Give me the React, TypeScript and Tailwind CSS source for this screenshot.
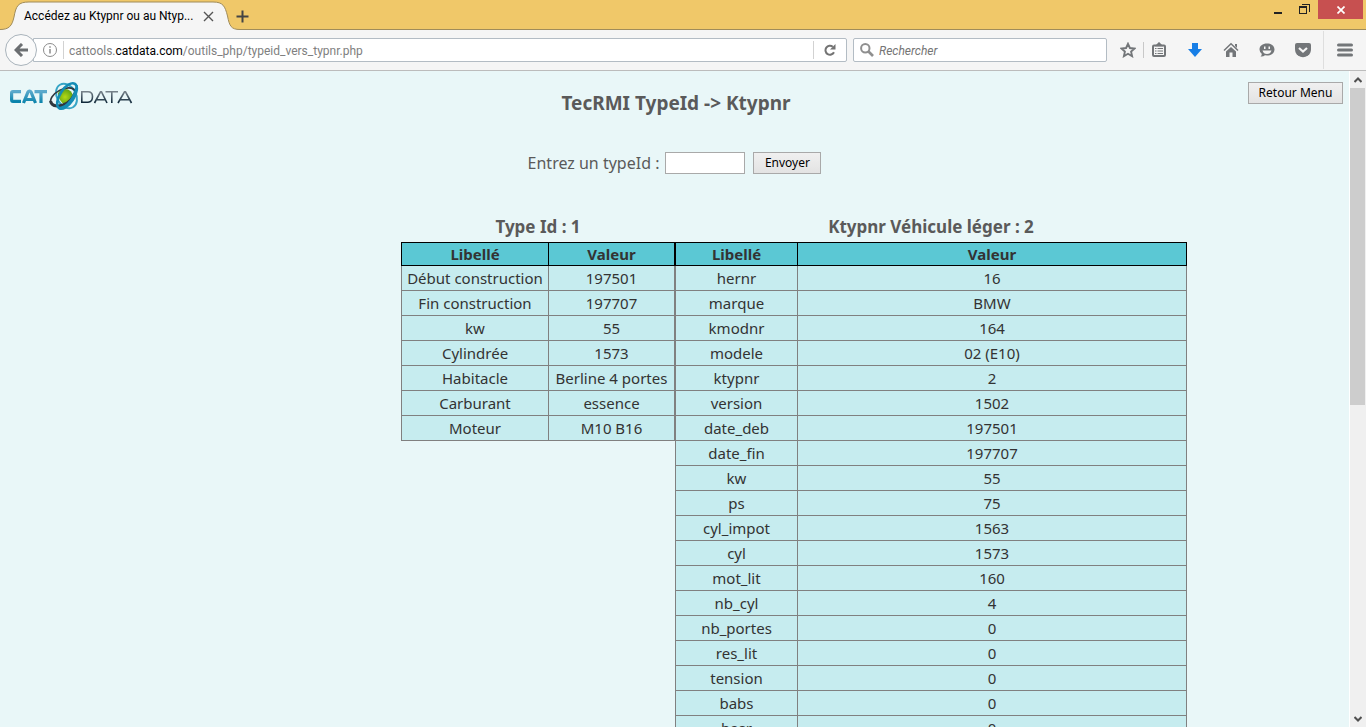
import React from "react";

const vehicle: [string, string][] = [
  ["Début construction", "197501"],
  ["Fin construction", "197707"],
  ["kw", "55"],
  ["Cylindrée", "1573"],
  ["Habitacle", "Berline 4 portes"],
  ["Carburant", "essence"],
  ["Moteur", "M10 B16"],
];

const ktypnr: [string, string][] = [
  ["hernr", "16"],
  ["marque", "BMW"],
  ["kmodnr", "164"],
  ["modele", "02 (E10)"],
  ["ktypnr", "2"],
  ["version", "1502"],
  ["date_deb", "197501"],
  ["date_fin", "197707"],
  ["kw", "55"],
  ["ps", "75"],
  ["cyl_impot", "1563"],
  ["cyl", "1573"],
  ["mot_lit", "160"],
  ["nb_cyl", "4"],
  ["nb_portes", "0"],
  ["res_lit", "0"],
  ["tension", "0"],
  ["babs", "0"],
  ["basr", "0"],
];

function TitleBar() {
  return (
    <header className="flex h-[30px] shrink-0 items-start justify-between bg-[#f0c869]">
      <div className="flex h-[30px] grow border-b border-[#a08c5a]">
        <div className="relative h-[30px] w-[240px] shrink-0">
          <svg className="absolute inset-0" width="240" height="30" viewBox="0 0 240 30" aria-hidden="true">
            <path
              d="M0 29.5 C9 29.5 12 26 14 17 C16 6 18 2 29 2 H213 C223 2 225 6 227.500 16 C229.500 26 231 29.500 240 29.500 V30 H0Z"
              fill="#f5f5f5"
            />
            <path
              d="M0 29.500 C9 29.500 12 26 14 17 C16 6 18 2 29 2 H213 C223 2 225 6 227.500 16 C229.500 26 231 29.500 240 29.500"
              fill="none"
              stroke="#a08c5a"
            />
          </svg>
          <div className="relative flex h-[30px] items-center pt-[2px] pl-6">
            <span className="w-[176px] text-[12px] whitespace-nowrap text-black">Accédez au Ktypnr ou au Ntyp...</span>
            <button aria-label="Fermer l'onglet" className="flex h-4 w-4 items-center justify-center">
              <svg width="11" height="11" viewBox="0 0 11 11" stroke="#555" strokeWidth="1.400">
                <path d="M1 1L10 10M10 1L1 10" />
              </svg>
            </button>
          </div>
        </div>
        <button aria-label="Nouvel onglet" className="flex h-[30px] w-[16px] items-center pt-[2px] -ml-1">
          <svg width="13" height="13" viewBox="0 0 13 13" stroke="#444" strokeWidth="2">
            <path d="M6.500 0.500V12.500M0.500 6.500H12.500" />
          </svg>
        </button>
      </div>
      <div className="flex h-[30px] items-start border-b border-[#a08c5a] pr-[3px]">
        <button aria-label="Réduire" className="flex h-[19px] w-[26px] items-center justify-center">
          <svg width="8" height="14" viewBox="0 0 8 14">
            <path d="M0 9H8V11H0Z" fill="#222" />
          </svg>
        </button>
        <button aria-label="Restaurer" className="flex h-[19px] w-[27px] items-center justify-center">
          <svg width="11" height="11" viewBox="0 0 11 11" fill="none" stroke="#222" shapeRendering="crispEdges">
            <path d="M3 .5H10.500V8M.5 3.500H7.500V9.500H.5ZM0 2.500H8" />
          </svg>
        </button>
        <button aria-label="Fermer" className="flex h-[19px] w-[45px] items-center justify-center bg-[#c75050]">
          <svg width="8" height="8" viewBox="0 0 8 8" stroke="#fff" strokeWidth="1.700">
            <path d="M0.500 0.500L7.500 7.500M7.500 0.500L0.500 7.500" />
          </svg>
        </button>
      </div>
    </header>
  );
}

function ToolButton({ label, children }: { label: string; children: React.ReactNode }) {
  return (
    <button aria-label={label} className="flex h-6 w-9 items-center justify-center">
      {children}
    </button>
  );
}

function Toolbar() {
  return (
    <nav className="flex h-[41px] shrink-0 items-center border-b border-[#bcbcbc] bg-[#f5f5f5] pl-[5px]">
      <button
        aria-label="Page précédente"
        className="relative z-10 flex h-8 w-8 shrink-0 items-center justify-center rounded-full border border-[#a9b3bb] bg-[#fafafa]"
      >
        <svg width="14" height="14" viewBox="0 0 14 14" fill="none" stroke="#6b6e71" strokeWidth="3">
          <path d="M8 1L2 7L8 13M2.500 7H14" />
        </svg>
      </button>
      <div className="-ml-1 flex h-6 min-w-0 flex-[804] items-center rounded-r-[2px] border border-[#b3bcc4] bg-white pl-2">
        <svg width="16" height="16" viewBox="0 0 16 16" fill="none" stroke="#8c8c8c" className="mr-[5px] shrink-0">
          <circle cx="8" cy="8" r="6.500" />
          <path d="M8 7V11.500M8 4.300V5.800" strokeWidth="1.500" />
        </svg>
        <div className="relative flex h-full min-w-0 grow items-center before:h-[18px] before:w-px before:bg-[#d2d2d2]">
          <input
            aria-label="Adresse"
            defaultValue="cattools.catdata.com/outils_php/typeid_vers_typnr.php"
            className="absolute inset-0 w-full bg-transparent pl-[6px] text-[12px] text-transparent outline-none"
          />
          <div aria-hidden="true" className="pointer-events-none flex h-full items-center pt-[2px] pl-[5px] text-[12px] whitespace-nowrap text-[#808080]">
            cattools.<span className="text-black">catdata.com</span>/outils_php/typeid_vers_typnr.php
          </div>
        </div>
        <button aria-label="Actualiser" className="flex h-[18px] w-[33px] shrink-0 items-center justify-center border-l border-[#d2d2d2]">
          <svg width="12" height="12" viewBox="0 0 12 12">
            <path d="M10 8.300A4.500 4.500 0 1 1 8.800 2.700" fill="none" stroke="#737373" strokeWidth="2" />
            <path d="M11.500 0V5.500H6Z" fill="#737373" />
          </svg>
        </button>
      </div>
      <div className="ml-[6px] flex h-6 min-w-0 flex-[246] items-center rounded-[2px] border border-[#b3bcc4] bg-white pl-[6px]">
        <svg width="14" height="14" viewBox="0 0 14 14" fill="none" stroke="#8f8f8f" className="shrink-0">
          <circle cx="5.300" cy="5.300" r="4.200" strokeWidth="2" />
          <path d="M8.500 8.500L13 13" strokeWidth="2.600" />
        </svg>
        <input
          aria-label="Rechercher"
          placeholder="Rechercher"
          className="h-full min-w-0 grow bg-transparent pt-[2px] pl-[5px] text-[12px] outline-none placeholder:italic placeholder:text-[#757575]"
        />
      </div>
      <div className="ml-[3px] flex shrink-0 items-center">
        <ToolButton label="Marquer cette page">
          <svg width="16" height="16" viewBox="0 0 16 16" fill="none" stroke="#737679" strokeWidth="1.900">
            <path d="M8 1.800L9.900 6L14.500 6.500L11.100 9.600L12.100 14.200L8 11.800L3.900 14.200L4.900 9.600L1.500 6.500L6.100 6Z" />
          </svg>
        </ToolButton>
        <div className="-ml-[3px] h-4 w-px bg-[#c8c8c8]" />
        <button aria-label="Marque-pages" className="flex h-6 w-[30px] items-center justify-center">
          <svg width="14" height="16" viewBox="0 0 14 16" fill="none" stroke="#737679">
            <path d="M1 4.500Q1 3.500 2 3.500H12Q13 3.500 13 4.500V13Q13 14 12 14H2Q1 14 1 13Z" strokeWidth="2" />
            <path d="M4.500 3.500L7 1L9.500 3.500Z" fill="#737679" strokeWidth="1.500" />
            <path d="M3 6.500H4.500M5.500 6.500H11M3 9H4.500M5.500 9H11M3 11.500H4.500M5.500 11.500H11" />
          </svg>
        </button>
        <div className="flex pl-[3px]">
          <ToolButton label="Téléchargements">
            <svg width="16" height="16" viewBox="0 0 16 16" fill="#177ee6">
              <path d="M5 1H11V7H15L8 15L1 7H5Z" />
            </svg>
          </ToolButton>
          <ToolButton label="Accueil">
            <svg width="16" height="16" viewBox="0 0 16 16" fill="#737679">
              <path d="M8 5L13 9.500V15H9.500V10.500H6.500V15H3V9.500Z" />
              <path d="M1 8.500L8 1.800L15 8.500" fill="none" stroke="#737679" strokeWidth="1.500" />
              <path d="M12 2H14V6L12 4Z" />
            </svg>
          </ToolButton>
          <ToolButton label="Hello">
            <svg width="16" height="16" viewBox="0 0 16 16">
              <path d="M8 1.500C12.500 1.500 15.500 4 15.500 7.500S12.500 13.500 8 13.500L6 13.200Q4 15 1.500 14.500Q3 13.300 2.700 11.700Q.5 10 .5 7.500C.5 4 3.500 1.500 8 1.500Z" fill="#737679" />
              <path d="M5 4.500H6.500V7H5ZM9.500 4.500H11V7H9.500ZM3.500 8.500H12.500Q11.500 12 8 12T3.500 8.500Z" fill="#f5f5f5" />
            </svg>
          </ToolButton>
          <ToolButton label="Pocket">
            <svg width="16" height="16" viewBox="0 0 16 16">
              <path d="M2 1H14Q16 1 16 3V7Q16 11 13 13.500Q8 17 3 13.500Q0 11 0 7V3Q0 1 2 1Z" fill="#737679" />
              <path d="M4 6L8 9.500L12 6" fill="none" stroke="#f5f5f5" strokeWidth="2.200" />
            </svg>
          </ToolButton>
        </div>
        <div className="ml-[2px] h-[38px] w-px bg-[#dedede]" />
        <button aria-label="Menu" className="flex h-6 w-[42px] items-center justify-center">
          <svg width="16" height="14" viewBox="0 0 16 14" stroke="#737679" strokeWidth="3" strokeLinecap="round">
            <path d="M1.500 2H14.500M1.500 7H14.500M1.500 12H14.500" />
          </svg>
        </button>
      </div>
    </nav>
  );
}

function Logo() {
  return (
    <svg width="124" height="34" viewBox="0 0 124 34" role="img" aria-label="CAT DATA">
      <defs>
        <linearGradient id="cat" x1="0" y1="0" x2="0" y2="1">
          <stop offset="0" stopColor="#5ba9cc" />
          <stop offset="1" stopColor="#0a83ab" />
        </linearGradient>
        <linearGradient id="data" x1="0" y1="0" x2="0" y2="1">
          <stop offset="0" stopColor="#76828a" />
          <stop offset="1" stopColor="#10293a" />
        </linearGradient>
        <radialGradient id="globe">
          <stop offset="0" stopColor="#b5d916" />
          <stop offset="1" stopColor="#5fa314" />
        </radialGradient>
      </defs>
      <g fill="none" stroke="url(#cat)" strokeWidth="3.200">
        <path d="M12 12.600H4Q2.600 12.600 2.600 14V20.500Q2.600 22.400 4 22.400H12" />
        <path d="M14.500 24L19 13Q19.500 12 20.500 12Q21.500 12 22 13L26.500 24M17 20.500H24" />
        <path d="M25.500 12.600H38M32 12.600V24" />
      </g>
      <circle cx="56" cy="18" r="8" fill="url(#globe)" />
      <ellipse cx="57.500" cy="17" rx="9.500" ry="13" transform="rotate(-30 57.500 17)" fill="none" stroke="#e9f7f8" strokeWidth="3.600" />
      <ellipse cx="57.500" cy="17" rx="9.500" ry="13" transform="rotate(-30 57.500 17)" fill="none" stroke="#36a5c6" strokeWidth="2" />
      <ellipse cx="54" cy="18" rx="13.500" ry="7.500" transform="rotate(-28 54 18)" fill="none" stroke="#30373e" strokeWidth="1.600" />
      <path d="M41.500 22Q43 29 54 26Q63 23 66 14" fill="none" stroke="#30373e" strokeWidth="3" />
      <ellipse cx="58" cy="17" rx="7" ry="14.500" transform="rotate(33 58 17)" fill="none" stroke="#148cb5" strokeWidth="2.600" />
      <path d="M50 29Q63 27 68 6" fill="none" stroke="#148cb5" strokeWidth="2" />
      <g fill="none" stroke="url(#data)" strokeWidth="1.600">
        <path d="M72.800 12.800H79Q83.500 12.800 83.500 17.500Q83.500 23.200 79 23.200H72.800Z" />
        <path d="M85.500 24L91.500 12.800H92.500L98 24M88 20.800H96" />
        <path d="M96.500 12.800H109M102.800 12.800V24" />
        <path d="M109 24L115.500 12.800H116.500L122.500 24M111.500 20.800H120" />
      </g>
    </svg>
  );
}

function DataTable({ caption, rows, labelWidth, tableWidth }: {
  caption: string;
  rows: [string, string][];
  labelWidth: string;
  tableWidth: string;
}) {
  return (
    <table className={`table-fixed border-collapse text-center text-[15px] leading-5 text-[#333] ${tableWidth}`}>
      <caption className="h-[26px] text-[17px] leading-[22px] font-bold text-[#5a5a5a]">{caption}</caption>
      <thead>
        <tr className="h-[23px] bg-[#5bc8d4]">
          <th className={`border border-black p-0 font-bold ${labelWidth}`}>Libellé</th>
          <th className="border border-black p-0 font-bold">Valeur</th>
        </tr>
      </thead>
      <tbody>
        {rows.map(([label, value]) => (
          <tr key={label} className="h-[25px] bg-[#c6ecef]">
            <td className="border border-[#808080] p-0">{label}</td>
            <td className="border border-[#808080] p-0">{value}</td>
          </tr>
        ))}
      </tbody>
    </table>
  );
}

const formButton = "h-[22px] border border-[#a9a9a9] bg-linear-to-b from-[#f0f0f0] to-[#e3e3e3] text-[12px] leading-5 text-black";

export default function App() {
  return (
    <div className="flex h-screen flex-col overflow-hidden font-[Roboto,'Open_Sans',sans-serif]">
      <TitleBar />
      <Toolbar />
      <div className="flex min-h-0 grow bg-[#e9f7f8] font-['Noto_Sans',sans-serif]">
        <main className="min-w-0 grow overflow-hidden">
          <div className="grid grid-cols-[1fr_auto_1fr] items-start pt-2 pr-[6px] pl-[9px]">
            <Logo />
            <h1 className="pt-[10px] text-[19px] leading-7 font-bold text-[#5a5a5a]">TecRMI TypeId -&gt; Ktypnr</h1>
            <button className={`mt-[3px] w-[95px] justify-self-end ${formButton}`}>Retour Menu</button>
          </div>
          <form className="mt-[35px] flex items-center justify-center" onSubmit={(e) => e.preventDefault()}>
            <label htmlFor="typeid" className="text-[16px] leading-[22px] text-[#5a5a5a]">
              Entrez un typeId :
            </label>
            <input id="typeid" className="mr-2 ml-[6px] h-[22px] w-20 border border-[#a9a9a9] bg-white px-1 text-[13px]" />
            <button className={`w-[68px] ${formButton}`}>Envoyer</button>
          </form>
          <div className="mt-[42px] flex items-start justify-center pl-[239px]">
            <DataTable caption="Type Id : 1" rows={vehicle} labelWidth="w-[147px]" tableWidth="w-[274px]" />
            <DataTable caption="Ktypnr Véhicule léger : 2" rows={ktypnr} labelWidth="w-[122px]" tableWidth="w-[512px]" />
          </div>
        </main>
        <div className="flex w-[17px] shrink-0 flex-col border-l border-white bg-[#f0f0f0]" aria-hidden="true">
          <div className="flex h-[17px] items-center justify-center">
            <svg width="8" height="6" viewBox="0 0 8 6" fill="none" stroke="#505050" strokeWidth="2">
              <path d="M0.500 5L4 1.500L7.500 5" />
            </svg>
          </div>
          <div className="min-h-0 grow">
            <div className="mr-px h-[51%] bg-[#cdcdcd]" />
          </div>
          <div className="flex h-[17px] items-center justify-center">
            <svg width="8" height="6" viewBox="0 0 8 6" fill="none" stroke="#505050" strokeWidth="2">
              <path d="M0.500 1L4 4.500L7.500 1" />
            </svg>
          </div>
        </div>
      </div>
    </div>
  );
}
